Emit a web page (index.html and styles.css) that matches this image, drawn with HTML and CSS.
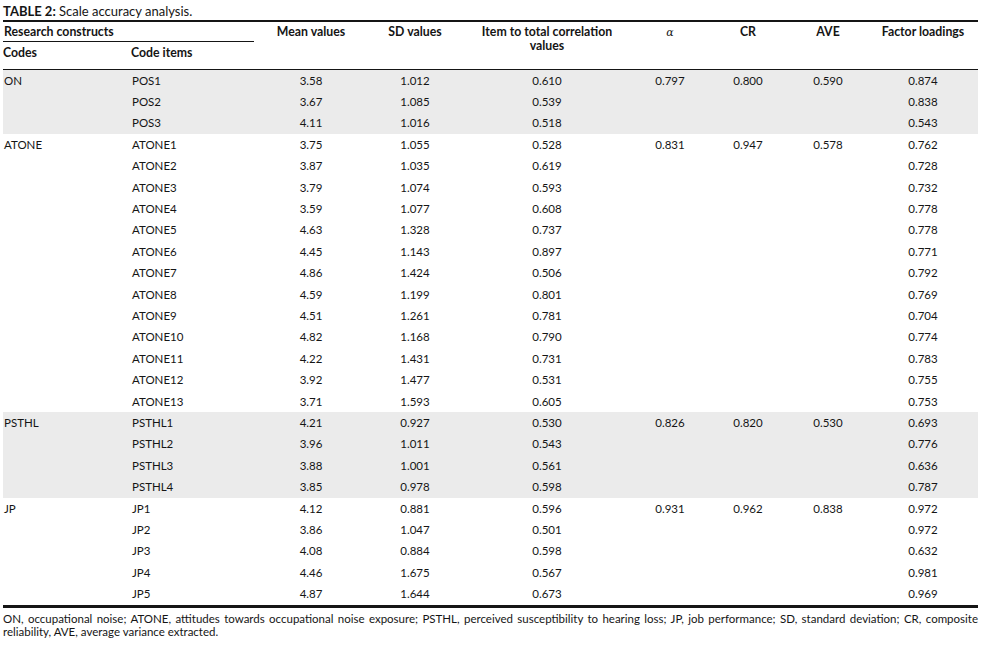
FILE: index.html
```html
<!DOCTYPE html>
<html>
<head>
<meta charset="utf-8">
<link rel="stylesheet" href="styles.css">
</head>
<body>
<div class="page">
  <div class="title"><b>TABLE 2:</b> Scale accuracy analysis.</div>
  <table class="data">
    <colgroup>
      <col class="c1"><col class="c2"><col class="c3"><col class="c4"><col class="c5"><col class="c6"><col class="c7"><col class="c8"><col class="c9">
    </colgroup>
    <thead>
      <tr class="h1">
        <th colspan="2" class="left group">Research constructs</th>
        <th rowspan="2">Mean values</th>
        <th rowspan="2">SD values</th>
        <th rowspan="2">Item to total correlation<br>values</th>
        <th rowspan="2"><i class="alpha">α</i></th>
        <th rowspan="2">CR</th>
        <th rowspan="2">AVE</th>
        <th rowspan="2">Factor loadings</th>
      </tr>
      <tr class="h2">
        <th class="left">Codes</th>
        <th class="left">Code items</th>
      </tr>
    </thead>
    <tbody class="shade">
      <tr><td class="left">ON</td><td class="left">POS1</td><td>3.58</td><td>1.012</td><td>0.610</td><td>0.797</td><td>0.800</td><td>0.590</td><td>0.874</td></tr>
      <tr><td></td><td class="left">POS2</td><td>3.67</td><td>1.085</td><td>0.539</td><td></td><td></td><td></td><td>0.838</td></tr>
      <tr><td></td><td class="left">POS3</td><td>4.11</td><td>1.016</td><td>0.518</td><td></td><td></td><td></td><td>0.543</td></tr>
    </tbody>
    <tbody>
      <tr><td class="left">ATONE</td><td class="left">ATONE1</td><td>3.75</td><td>1.055</td><td>0.528</td><td>0.831</td><td>0.947</td><td>0.578</td><td>0.762</td></tr>
      <tr><td></td><td class="left">ATONE2</td><td>3.87</td><td>1.035</td><td>0.619</td><td></td><td></td><td></td><td>0.728</td></tr>
      <tr><td></td><td class="left">ATONE3</td><td>3.79</td><td>1.074</td><td>0.593</td><td></td><td></td><td></td><td>0.732</td></tr>
      <tr><td></td><td class="left">ATONE4</td><td>3.59</td><td>1.077</td><td>0.608</td><td></td><td></td><td></td><td>0.778</td></tr>
      <tr><td></td><td class="left">ATONE5</td><td>4.63</td><td>1.328</td><td>0.737</td><td></td><td></td><td></td><td>0.778</td></tr>
      <tr><td></td><td class="left">ATONE6</td><td>4.45</td><td>1.143</td><td>0.897</td><td></td><td></td><td></td><td>0.771</td></tr>
      <tr><td></td><td class="left">ATONE7</td><td>4.86</td><td>1.424</td><td>0.506</td><td></td><td></td><td></td><td>0.792</td></tr>
      <tr><td></td><td class="left">ATONE8</td><td>4.59</td><td>1.199</td><td>0.801</td><td></td><td></td><td></td><td>0.769</td></tr>
      <tr><td></td><td class="left">ATONE9</td><td>4.51</td><td>1.261</td><td>0.781</td><td></td><td></td><td></td><td>0.704</td></tr>
      <tr><td></td><td class="left">ATONE10</td><td>4.82</td><td>1.168</td><td>0.790</td><td></td><td></td><td></td><td>0.774</td></tr>
      <tr><td></td><td class="left">ATONE11</td><td>4.22</td><td>1.431</td><td>0.731</td><td></td><td></td><td></td><td>0.783</td></tr>
      <tr><td></td><td class="left">ATONE12</td><td>3.92</td><td>1.477</td><td>0.531</td><td></td><td></td><td></td><td>0.755</td></tr>
      <tr><td></td><td class="left">ATONE13</td><td>3.71</td><td>1.593</td><td>0.605</td><td></td><td></td><td></td><td>0.753</td></tr>
    </tbody>
    <tbody class="shade">
      <tr><td class="left">PSTHL</td><td class="left">PSTHL1</td><td>4.21</td><td>0.927</td><td>0.530</td><td>0.826</td><td>0.820</td><td>0.530</td><td>0.693</td></tr>
      <tr><td></td><td class="left">PSTHL2</td><td>3.96</td><td>1.011</td><td>0.543</td><td></td><td></td><td></td><td>0.776</td></tr>
      <tr><td></td><td class="left">PSTHL3</td><td>3.88</td><td>1.001</td><td>0.561</td><td></td><td></td><td></td><td>0.636</td></tr>
      <tr><td></td><td class="left">PSTHL4</td><td>3.85</td><td>0.978</td><td>0.598</td><td></td><td></td><td></td><td>0.787</td></tr>
    </tbody>
    <tbody class="last">
      <tr><td class="left">JP</td><td class="left">JP1</td><td>4.12</td><td>0.881</td><td>0.596</td><td>0.931</td><td>0.962</td><td>0.838</td><td>0.972</td></tr>
      <tr><td></td><td class="left">JP2</td><td>3.86</td><td>1.047</td><td>0.501</td><td></td><td></td><td></td><td>0.972</td></tr>
      <tr><td></td><td class="left">JP3</td><td>4.08</td><td>0.884</td><td>0.598</td><td></td><td></td><td></td><td>0.632</td></tr>
      <tr><td></td><td class="left">JP4</td><td>4.46</td><td>1.675</td><td>0.567</td><td></td><td></td><td></td><td>0.981</td></tr>
      <tr><td></td><td class="left">JP5</td><td>4.87</td><td>1.644</td><td>0.673</td><td></td><td></td><td></td><td>0.969</td></tr>
    </tbody>
  </table>
  <div class="note">
    <div class="note-line justified">ON, occupational noise; ATONE, attitudes towards occupational noise exposure; PSTHL, perceived susceptibility to hearing loss; JP, job performance; SD, standard deviation; CR, composite</div>
    <div class="note-line">reliability, AVE, average variance extracted.</div>
  </div>
</div>
</body>
</html>
```

FILE: styles.css
```css
html, body {
  margin: 0;
  padding: 0;
  background: #ffffff;
}

.page {
  width: 975px;
  padding: 3px 0 0 3px;
  font-family: Lato, "Open Sans", sans-serif;
  color: #151515;
}

.title {
  font-size: 13px;
  line-height: 17px;
}

.title b {
  font-weight: 700;
}

.data {
  width: 975px;
  table-layout: fixed;
  border-collapse: collapse;
  border-top: 2px solid #151515;
  border-bottom: 3px solid #151515;
  font-size: 11.5px;
}

.c1 { width: 128px; }
.c2 { width: 123px; }
.c3 { width: 114px; }
.c4 { width: 94px; }
.c5 { width: 170px; }
.c6 { width: 76px; }
.c7 { width: 80px; }
.c8 { width: 80px; }
.c9 { width: 110px; }

th {
  font-weight: 700;
  font-size: 12.3px;
  text-align: center;
  vertical-align: top;
  line-height: 14px;
  padding: 3px 0 2px 0;
}

.h2 th {
  padding: 4px 0 9px 0;
}

thead {
  border-bottom: 1px solid #151515;
}

th.group {
  border-bottom: 1px solid #151515;
}

.left {
  text-align: left;
  padding-left: 1px;
}

.alpha {
  font-family: "DejaVu Serif", "Liberation Serif", serif;
  font-weight: 400;
  font-style: italic;
  font-size: 11px;
}

td {
  text-align: center;
  height: 21.4px;
  padding: 0;
  line-height: 14px;
  vertical-align: middle;
}

.shade td {
  background: #ebebeb;
}

.note {
  padding-top: 4px;
  font-size: 11.5px;
  line-height: 13px;
}

.note-line.justified {
  text-align: justify;
  text-align-last: justify;
}
```
